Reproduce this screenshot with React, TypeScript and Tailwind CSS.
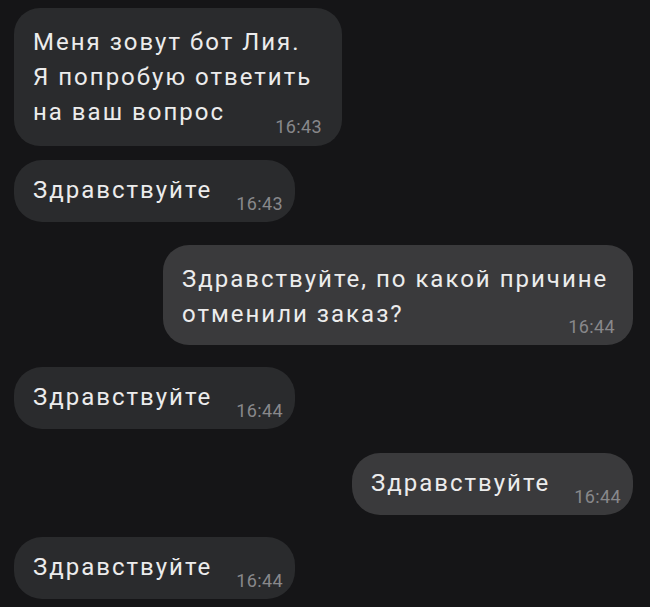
import React from 'react'

const font = { fontFamily: 'Roboto, "Noto Sans", sans-serif' }

function Time({ t, className = '' }: { t: string; className?: string }) {
  return (
    <span className={`text-[18px] leading-[20px] tracking-[0.4px] text-[#88888b] ${className}`}>{t}</span>
  )
}

function Short({ side, time }: { side: 'left' | 'right'; time: string }) {
  const bg = side === 'left' ? 'bg-[#2a2b2d]' : 'bg-[#3a3a3c] self-end'
  return (
    <div className={`flex w-[281px] items-start rounded-[28px] pb-[8px] pl-[19px] pr-[12px] pt-[13px] ${bg}`}>
      <span className="text-[24px] leading-[35px] tracking-[2px] text-[#ececec]">Здравствуйте</span>
      <Time t={time} className="ml-auto mt-[21px]" />
    </div>
  )
}

export default function App() {
  return (
    <div style={font} className="flex h-[607px] w-[650px] flex-col overflow-hidden bg-[#151517] pl-[14px] pr-[17px] pt-[8px]">
      <div className="flex w-[328px] flex-col rounded-[26px] bg-[#2a2b2d] pb-[9px] pl-[19px] pr-[20px] pt-[17px]">
        <p className="text-[24px] leading-[35px] tracking-[2px] text-[#ececec]">
          Меня зовут бот Лия.
          <br />
          Я попробую ответить
          <br />
          на ваш вопрос
        </p>
        <Time t="16:43" className="-mt-[13px] self-end" />
      </div>

      <div className="mt-[14px]">
        <Short side="left" time="16:43" />
      </div>

      <div className="mt-[23px] flex w-[470px] flex-col self-end rounded-[26px] bg-[#3a3a3c] pb-[8px] pl-[19px] pr-[18px] pt-[17px]">
        <p className="whitespace-nowrap text-[24px] leading-[35px] tracking-[2px] text-[#ececec]">
          Здравствуйте, по какой причине
          <br />
          отменили заказ?
        </p>
        <Time t="16:44" className="-mt-[15px] self-end" />
      </div>

      <div className="mt-[22px]">
        <Short side="left" time="16:44" />
      </div>

      <div className="mt-[24px] flex flex-col">
        <Short side="right" time="16:44" />
      </div>

      <div className="mt-[22px]">
        <Short side="left" time="16:44" />
      </div>
    </div>
  )
}
